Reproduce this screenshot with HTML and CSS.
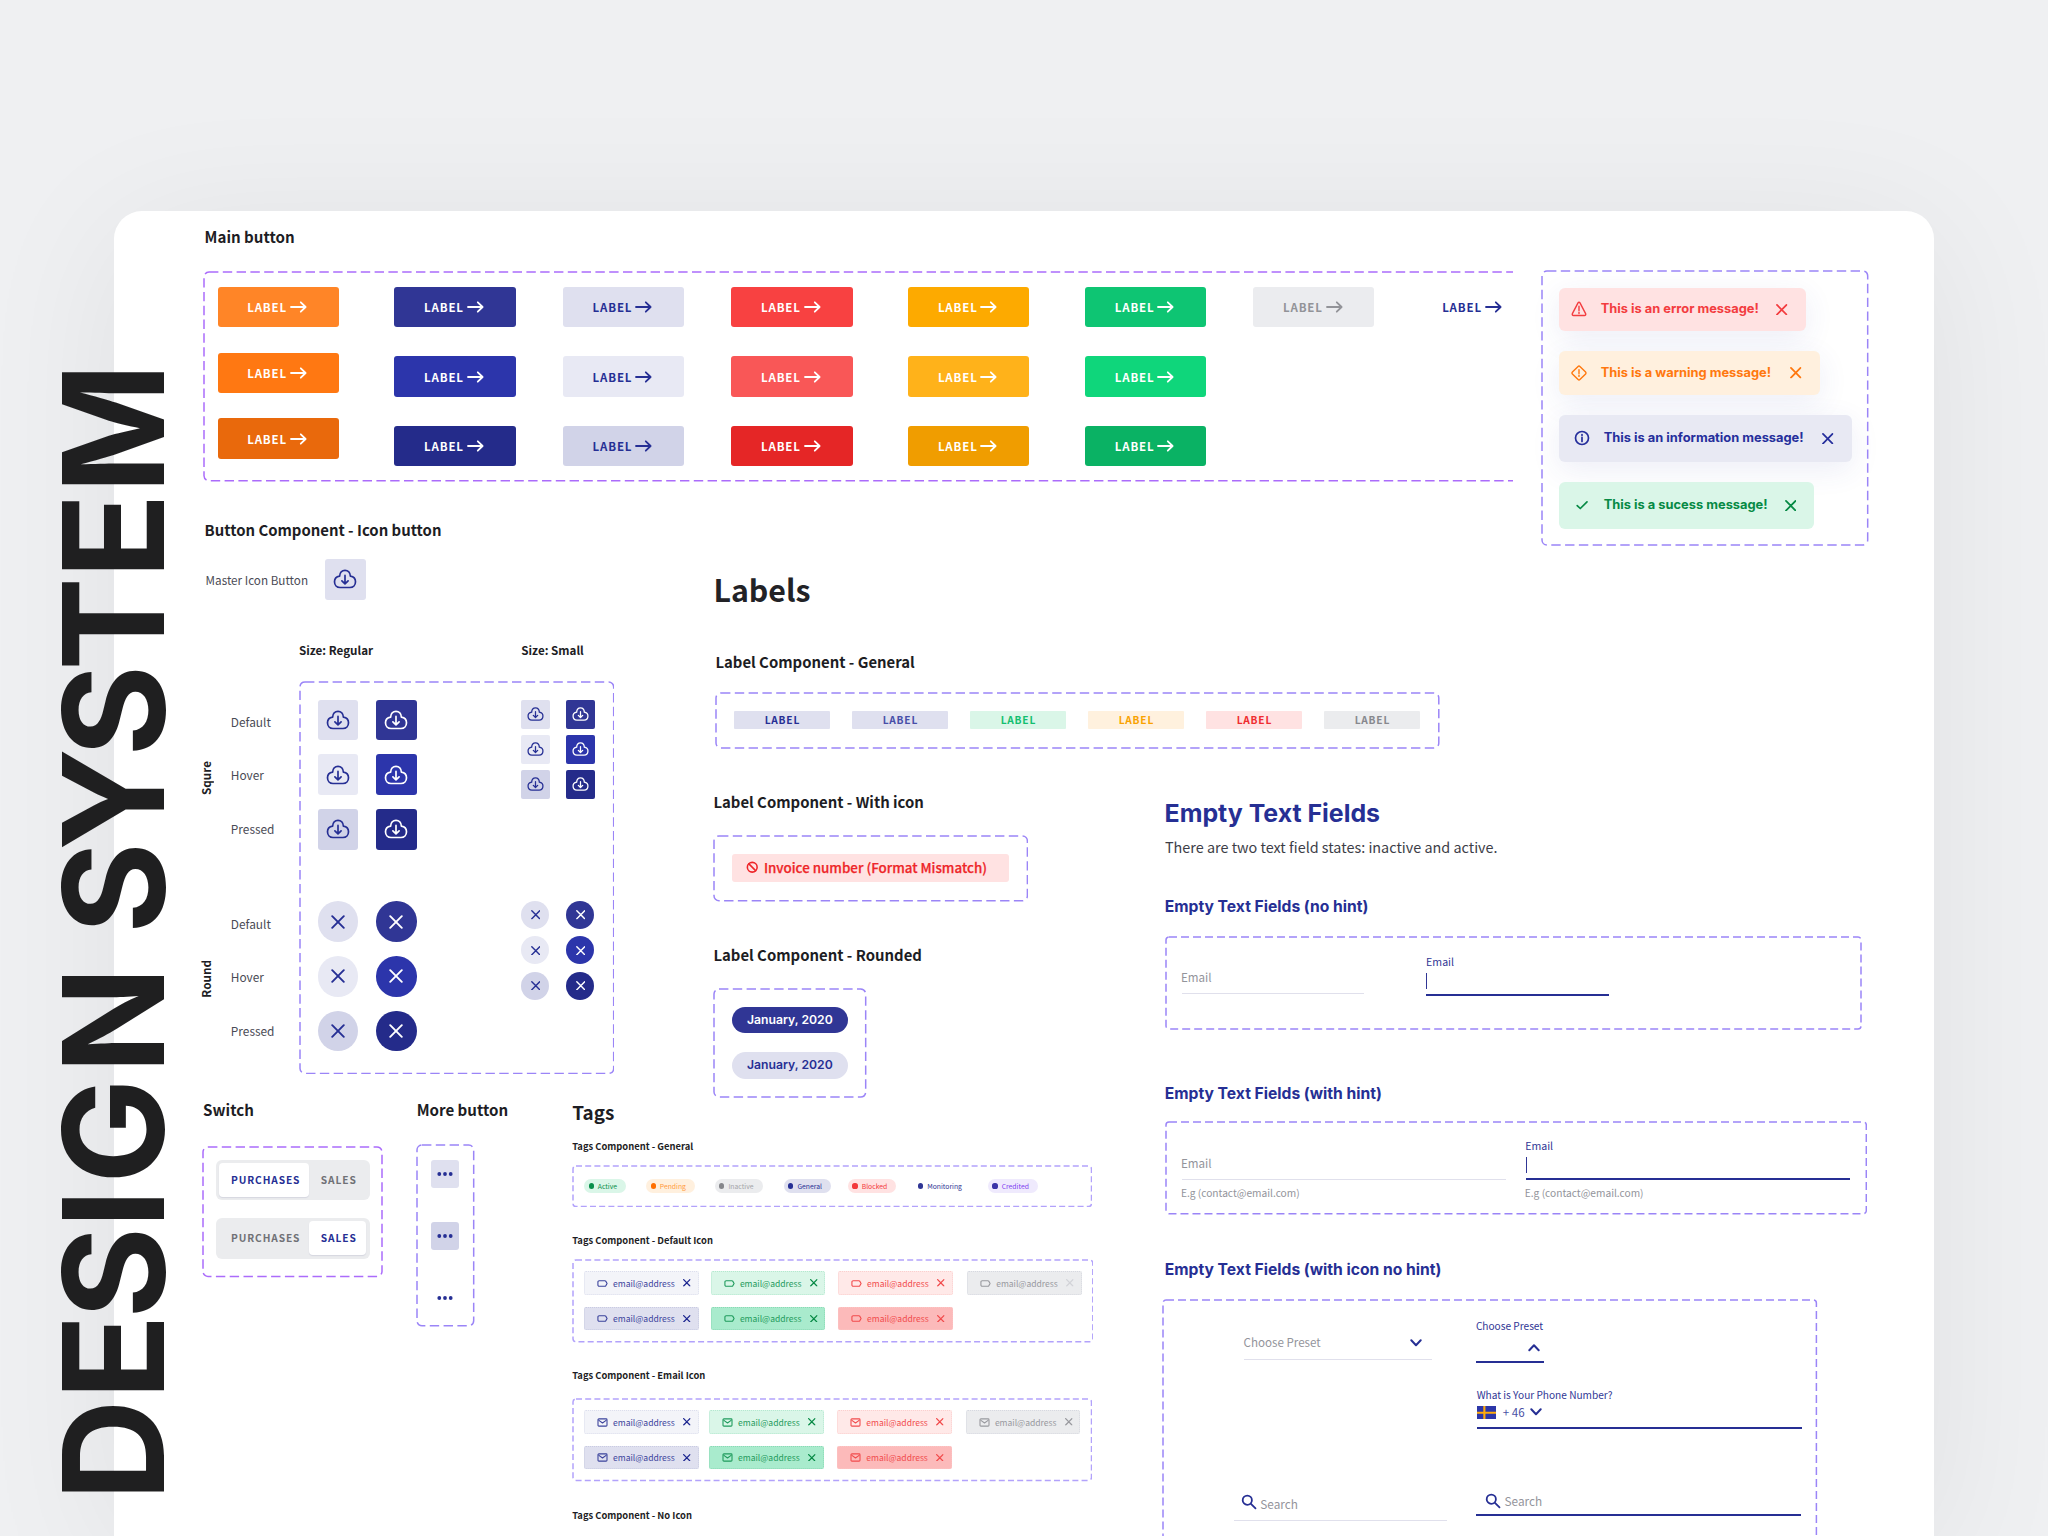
FILE: index.html
```html
<!DOCTYPE html>
<html lang="en">
<head>
    <meta charset="UTF-8">
    <meta name="viewport" content="width=device-width, initial-scale=1.0">
    <title>Design System</title>
    <link rel="stylesheet" href="styles.css">
</head>
<body>
    <!-- icon sprite -->
    <svg class="sprite">
        <symbol id="arrow" viewBox="0 0 17 12"><path d="M1 6h14.5M10.8 1.3 15.6 6l-4.8 4.7"/></symbol>
        <symbol id="cloud" viewBox="0 0 24 20"><path d="M6.6 7.2C6.8 3.7 9 1.3 12 1.3s5.2 2.4 5.4 5.9c3 .5 5.1 2.7 5.1 5.6 0 3.3-2.3 5.7-5.5 5.7H7c-3.2 0-5.5-2.4-5.5-5.7 0-2.9 2.1-5.1 5.1-5.6zM12 6.4v8.2M8.9 11.8l3.1 3.1 3.1-3.1"/></symbol>
        <symbol id="cross" viewBox="0 0 14 14"><path d="M1.2 1.2l11.6 11.6M12.8 1.2 1.2 12.8"/></symbol>
        <symbol id="error" viewBox="0 0 16 16"><path d="M7 1.9 1.4 12.6c-.4.9 0 1.9 1.1 1.9h11c1.1 0 1.5-1 1.1-1.9L9 1.9c-.5-.8-1.5-.8-2 0zM8 5.3v4.2M8 11.2v1.3"/></symbol>
        <symbol id="warning" viewBox="0 0 16 16"><path d="M7.1 1.4 1.4 7.1c-.5.5-.5 1.3 0 1.8l5.7 5.7c.5.5 1.3.5 1.8 0l5.7-5.7c.5-.5.5-1.3 0-1.8L8.9 1.4c-.5-.5-1.3-.5-1.8 0zM8 4.6v4M8 10.1v1.3"/></symbol>
        <symbol id="info" viewBox="0 0 16 16"><circle cx="8" cy="8" r="6.5"/><path d="M8 7.3v4.2M8 4.5v.8"/></symbol>
        <symbol id="check" viewBox="0 0 16 16"><path d="M3.2 8.6 6.3 11.5 13 4.8"/></symbol>
        <symbol id="ban" viewBox="0 0 12 12"><circle cx="6" cy="6" r="4.7"/><path d="M2.8 2.8l6.4 6.4"/></symbol>
        <symbol id="tag" viewBox="0 0 12 8"><path d="M2.4 1h6.2c.4 0 .7.1.9.4L11 4 9.5 6.6c-.2.3-.5.4-.9.4H2.4C1.6 7 1 6.4 1 5.6V2.4C1 1.6 1.6 1 2.4 1z"/></symbol>
        <symbol id="mail" viewBox="0 0 12 10"><rect x="1" y="1" width="10" height="8" rx="1"/><path d="M2 2.6l4 3 4-3"/></symbol>
        <symbol id="down" viewBox="0 0 12 8"><path d="M1.3 1.3 6 6.2l4.7-4.9"/></symbol>
        <symbol id="up" viewBox="0 0 12 8"><path d="M1.3 6.2 6 1.3l4.7 4.9"/></symbol>
        <symbol id="search" viewBox="0 0 16 16"><circle cx="6.3" cy="6.2" r="4.6"/><path d="M9.7 9.6l4.8 4.8"/></symbol>
        <symbol id="dots" viewBox="0 0 16 4"><circle cx="2.3" cy="2" r="1.9"/><circle cx="8" cy="2" r="1.9"/><circle cx="13.7" cy="2" r="1.9"/></symbol>
    </svg>

    <div class="title">D<span class="k-mid">E</span><span class="k-low">S</span><span class="k-wide">IG</span>N <span class="k-tight">SY</span><span class="k-mid2">S</span><span class="k-low">T</span>EM</div>

    <div class="sheet">
        <div class="top">
            <section class="main-buttons">
                <h2>Main button</h2>
                <div class="frame purple open">
                    <svg class="dash"><rect/></svg>
                    <div class="btn-col tight">
                        <div class="btn orange">LABEL<svg><use href="#arrow"/></svg></div>
                        <div class="btn orange-hover">LABEL<svg><use href="#arrow"/></svg></div>
                        <div class="btn orange-pressed">LABEL<svg><use href="#arrow"/></svg></div>
                    </div>
                    <div class="btn-col">
                        <div class="btn navy">LABEL<svg><use href="#arrow"/></svg></div>
                        <div class="btn navy-hover">LABEL<svg><use href="#arrow"/></svg></div>
                        <div class="btn navy-pressed">LABEL<svg><use href="#arrow"/></svg></div>
                    </div>
                    <div class="btn-col">
                        <div class="btn soft">LABEL<svg><use href="#arrow"/></svg></div>
                        <div class="btn soft-hover">LABEL<svg><use href="#arrow"/></svg></div>
                        <div class="btn soft-pressed">LABEL<svg><use href="#arrow"/></svg></div>
                    </div>
                    <div class="btn-col">
                        <div class="btn red">LABEL<svg><use href="#arrow"/></svg></div>
                        <div class="btn red-hover">LABEL<svg><use href="#arrow"/></svg></div>
                        <div class="btn red-pressed">LABEL<svg><use href="#arrow"/></svg></div>
                    </div>
                    <div class="btn-col">
                        <div class="btn yellow">LABEL<svg><use href="#arrow"/></svg></div>
                        <div class="btn yellow-hover">LABEL<svg><use href="#arrow"/></svg></div>
                        <div class="btn yellow-pressed">LABEL<svg><use href="#arrow"/></svg></div>
                    </div>
                    <div class="btn-col">
                        <div class="btn green">LABEL<svg><use href="#arrow"/></svg></div>
                        <div class="btn green-hover">LABEL<svg><use href="#arrow"/></svg></div>
                        <div class="btn green-pressed">LABEL<svg><use href="#arrow"/></svg></div>
                    </div>
                    <div class="btn-col">
                        <div class="btn disabled">LABEL<svg><use href="#arrow"/></svg></div>
                    </div>
                    <div class="btn-col">
                        <div class="btn ghost">LABEL<svg><use href="#arrow"/></svg></div>
                    </div>
                </div>
            </section>

            <section class="frame alerts">
                <svg class="dash"><rect/></svg>
                <div class="alert error"><svg class="ico"><use href="#error"/></svg><span>This is an error message!</span><svg class="x"><use href="#cross"/></svg></div>
                <div class="alert warning"><svg class="ico"><use href="#warning"/></svg><span>This is a warning message!</span><svg class="x"><use href="#cross"/></svg></div>
                <div class="alert info"><svg class="ico"><use href="#info"/></svg><span>This is an information message!</span><svg class="x"><use href="#cross"/></svg></div>
                <div class="alert success"><svg class="ico"><use href="#check"/></svg><span>This is a sucess message!</span><svg class="x"><use href="#cross"/></svg></div>
            </section>
        </div>

        <div class="lower">
            <div class="left">
                <div class="upper">
                    <section class="icon-buttons">
                        <h2>Button Component - Icon button</h2>
                        <div class="master">
                            <span>Master Icon Button</span>
                            <div class="icon-btn soft"><svg><use href="#cloud"/></svg></div>
                        </div>
                        <div class="sizes"><b>Size: Regular</b><b>Size: Small</b></div>
                        <div class="matrix">
                            <div class="shapes"><b>Squre</b><b>Round</b></div>
                            <div class="states">
                                <div><span>Default</span><span>Hover</span><span>Pressed</span></div>
                                <div><span>Default</span><span>Hover</span><span>Pressed</span></div>
                            </div>
                            <div class="frame icons">
                                <svg class="dash"><rect/></svg>
                                <div class="regular">
                                    <div class="icon-grid">
                                        <div class="icon-btn soft"><svg><use href="#cloud"/></svg></div>
                                        <div class="icon-btn navy"><svg><use href="#cloud"/></svg></div>
                                        <div class="icon-btn soft-hover"><svg><use href="#cloud"/></svg></div>
                                        <div class="icon-btn navy-hover"><svg><use href="#cloud"/></svg></div>
                                        <div class="icon-btn soft-pressed"><svg><use href="#cloud"/></svg></div>
                                        <div class="icon-btn navy-pressed"><svg><use href="#cloud"/></svg></div>
                                    </div>
                                    <div class="icon-grid round">
                                        <div class="icon-btn soft"><svg><use href="#cross"/></svg></div>
                                        <div class="icon-btn navy"><svg><use href="#cross"/></svg></div>
                                        <div class="icon-btn soft-hover"><svg><use href="#cross"/></svg></div>
                                        <div class="icon-btn navy-hover"><svg><use href="#cross"/></svg></div>
                                        <div class="icon-btn soft-pressed"><svg><use href="#cross"/></svg></div>
                                        <div class="icon-btn navy-pressed"><svg><use href="#cross"/></svg></div>
                                    </div>
                                </div>
                                <div class="small">
                                    <div class="icon-grid">
                                        <div class="icon-btn soft"><svg><use href="#cloud"/></svg></div>
                                        <div class="icon-btn navy"><svg><use href="#cloud"/></svg></div>
                                        <div class="icon-btn soft-hover"><svg><use href="#cloud"/></svg></div>
                                        <div class="icon-btn navy-hover"><svg><use href="#cloud"/></svg></div>
                                        <div class="icon-btn soft-pressed"><svg><use href="#cloud"/></svg></div>
                                        <div class="icon-btn navy-pressed"><svg><use href="#cloud"/></svg></div>
                                    </div>
                                    <div class="icon-grid round">
                                        <div class="icon-btn soft"><svg><use href="#cross"/></svg></div>
                                        <div class="icon-btn navy"><svg><use href="#cross"/></svg></div>
                                        <div class="icon-btn soft-hover"><svg><use href="#cross"/></svg></div>
                                        <div class="icon-btn navy-hover"><svg><use href="#cross"/></svg></div>
                                        <div class="icon-btn soft-pressed"><svg><use href="#cross"/></svg></div>
                                        <div class="icon-btn navy-pressed"><svg><use href="#cross"/></svg></div>
                                    </div>
                                </div>
                            </div>
                        </div>
                    </section>

                    <section class="labels">
                        <h1>Labels</h1>
                        <h2 class="general">Label Component - General</h2>
                        <div class="frame chips">
                            <svg class="dash"><rect/></svg>
                            <span class="chip soft">LABEL</span>
                            <span class="chip soft light">LABEL</span>
                            <span class="chip chip-green">LABEL</span>
                            <span class="chip chip-yellow">LABEL</span>
                            <span class="chip chip-red">LABEL</span>
                            <span class="chip chip-gray">LABEL</span>
                        </div>
                        <h2 class="h-with">Label Component - With icon</h2>
                        <div class="frame with-icon">
                            <svg class="dash"><rect/></svg>
                            <div class="invoice"><svg><use href="#ban"/></svg>Invoice number (Format Mismatch)</div>
                        </div>
                        <h2>Label Component - Rounded</h2>
                        <div class="frame rounded">
                            <svg class="dash"><rect/></svg>
                            <div class="pill navy">January, 2020</div>
                            <div class="pill soft">January, 2020</div>
                        </div>
                    </section>
                </div>

                <div class="bottom">
                    <section class="switches">
                        <h2>Switch</h2>
                        <div class="frame purple">
                            <svg class="dash"><rect/></svg>
                            <div class="switch"><span class="on">PURCHASES</span><span>SALES</span></div>
                            <div class="switch"><span>PURCHASES</span><span class="on">SALES</span></div>
                        </div>
                    </section>
                    <section class="more">
                        <h2>More button</h2>
                        <div class="frame">
                            <svg class="dash"><rect/></svg>
                            <div class="more-btn soft"><svg><use href="#dots"/></svg></div>
                            <div class="more-btn soft-pressed"><svg><use href="#dots"/></svg></div>
                            <div class="more-btn"><svg><use href="#dots"/></svg></div>
                        </div>
                    </section>
                    <section class="tags">
                        <h2>Tags</h2>
                        <h3>Tags Component - General</h3>
                        <div class="frame fine statuses">
                            <svg class="dash"><rect/></svg>
                            <div><span class="status active">Active</span></div>
                            <div><span class="status pending">Pending</span></div>
                            <div><span class="status inactive">Inactive</span></div>
                            <div><span class="status st-general">General</span></div>
                            <div><span class="status blocked">Blocked</span></div>
                            <div><span class="status monitoring">Monitoring</span></div>
                            <div><span class="status credited">Credited</span></div>
                        </div>
                        <h3 class="h-default">Tags Component - Default Icon</h3>
                        <div class="frame fine tag-grid">
                            <svg class="dash"><rect/></svg>
                            <div class="tag t-navy"><svg class="ti"><use href="#tag"/></svg>email@address<svg class="tx"><use href="#cross"/></svg></div>
                            <div class="tag t-green"><svg class="ti"><use href="#tag"/></svg>email@address<svg class="tx"><use href="#cross"/></svg></div>
                            <div class="tag t-red"><svg class="ti"><use href="#tag"/></svg>email@address<svg class="tx"><use href="#cross"/></svg></div>
                            <div class="tag t-gray faded"><svg class="ti"><use href="#tag"/></svg>email@address<svg class="tx"><use href="#cross"/></svg></div>
                            <div class="tag t-navy on"><svg class="ti"><use href="#tag"/></svg>email@address<svg class="tx"><use href="#cross"/></svg></div>
                            <div class="tag t-green on"><svg class="ti"><use href="#tag"/></svg>email@address<svg class="tx"><use href="#cross"/></svg></div>
                            <div class="tag t-red on"><svg class="ti"><use href="#tag"/></svg>email@address<svg class="tx"><use href="#cross"/></svg></div>
                        </div>
                        <h3 class="h-email">Tags Component - Email Icon</h3>
                        <div class="frame fine tag-grid mail">
                            <svg class="dash"><rect/></svg>
                            <div class="tag t-navy"><svg class="ti"><use href="#mail"/></svg>email@address<svg class="tx"><use href="#cross"/></svg></div>
                            <div class="tag t-green"><svg class="ti"><use href="#mail"/></svg>email@address<svg class="tx"><use href="#cross"/></svg></div>
                            <div class="tag t-red"><svg class="ti"><use href="#mail"/></svg>email@address<svg class="tx"><use href="#cross"/></svg></div>
                            <div class="tag t-gray"><svg class="ti"><use href="#mail"/></svg>email@address<svg class="tx"><use href="#cross"/></svg></div>
                            <div class="tag t-navy on"><svg class="ti"><use href="#mail"/></svg>email@address<svg class="tx"><use href="#cross"/></svg></div>
                            <div class="tag t-green on"><svg class="ti"><use href="#mail"/></svg>email@address<svg class="tx"><use href="#cross"/></svg></div>
                            <div class="tag t-red on"><svg class="ti"><use href="#mail"/></svg>email@address<svg class="tx"><use href="#cross"/></svg></div>
                        </div>
                        <h3 class="h-none">Tags Component - No Icon</h3>
                    </section>
                </div>
            </div>

            <section class="fields">
                <h1>Empty Text Fields</h1>
                <p>There are two text field states: inactive and active.</p>

                <h2>Empty Text Fields (no hint)</h2>
                <div class="frame mid no-hint">
                    <svg class="dash"><rect/></svg>
                    <div class="field"><span class="value">Email</span></div>
                    <div class="field focus"><label>Email</label><i class="caret"></i></div>
                </div>

                <h2 class="h-hint">Empty Text Fields (with hint)</h2>
                <div class="frame mid hint">
                    <svg class="dash"><rect/></svg>
                    <div>
                        <div class="field"><span class="value">Email</span></div>
                        <small>E.g (contact@email.com)</small>
                    </div>
                    <div>
                        <div class="field focus"><label>Email</label><i class="caret"></i></div>
                        <small>E.g (contact@email.com)</small>
                    </div>
                </div>

                <h2 class="h-icon">Empty Text Fields (with icon no hint)</h2>
                <div class="frame mid with-icons">
                    <svg class="dash"><rect/></svg>
                    <div class="col-inactive">
                        <div class="field select"><span class="value">Choose Preset</span><svg class="chev"><use href="#down"/></svg></div>
                        <div class="field search"><svg class="glass"><use href="#search"/></svg><span class="value">Search</span></div>
                    </div>
                    <div class="col-active">
                        <div class="field focus select"><label>Choose Preset</label><svg class="chev"><use href="#up"/></svg></div>
                        <div class="field focus phone">
                            <label>What is Your Phone Number?</label>
                            <div class="number">
                                <svg class="flag" viewBox="0 0 20 14" preserveAspectRatio="none"><rect width="20" height="14" fill="#2d37a8"/><path d="M7.6 0v14M0 7h20" stroke="#ffab0a" stroke-width="2.2"/></svg>
                                <span>+ 46</span>
                                <svg class="chev"><use href="#down"/></svg>
                            </div>
                        </div>
                        <div class="field focus search"><svg class="glass"><use href="#search"/></svg><span class="value">Search</span></div>
                    </div>
                </div>
            </section>
        </div>
    </div>
</body>
</html>
```
FILE: styles.css
```css
* {
    box-sizing: border-box;
}
html, body {
    width: 2048px;
    height: 1536px;
    margin: 0;
    overflow: hidden;
}
body {
    position: relative;
    background: #eff0f2;
    font-family: "Noto Sans CJK SC", "Noto Sans", sans-serif;
    color: #1d1d24;
}
svg {
    display: block;
    flex: none;
    fill: none;
    stroke: currentColor;
    stroke-linecap: round;
    stroke-linejoin: round;
}
.sprite {
    position: absolute;
    width: 0;
    height: 0;
}
h1, h2, h3, p {
    margin: 0;
    white-space: nowrap;
}
h2 {
    font-size: 15.1px;
    line-height: 20px;
}
h3 {
    font-size: 9.4px;
    line-height: 14px;
}

/* big vertical title over the sheet edge */
.title {
    position: absolute;
    z-index: 2;
    left: 28.2px;
    bottom: 35px;
    writing-mode: vertical-rl;
    transform: rotate(180deg);
    font: 700 140px/170px Inter, sans-serif;
    color: #1f1f20;
    white-space: nowrap;
}
.k-mid { letter-spacing: -4px; }
.k-mid2 { letter-spacing: -5.6px; }
.k-low { letter-spacing: -1.4px; }
.k-wide { letter-spacing: 5.2px; }
.k-tight { letter-spacing: -8.5px; }

.sheet {
    margin: 211px 0 0 114px;
    width: 1820px;
    height: 1325px;
    padding: 15px 0 0 89px;
    border-radius: 28px 28px 0 0;
    background: #fff;
    box-shadow: 0 20px 150px rgba(20, 22, 30, 0.065);
}

/* dashed component frames */
.frame {
    position: relative;
    color: #9b85f7;
}
.dash {
    position: absolute;
    inset: 0;
    width: 100%;
    height: 100%;
}
.dash rect {
    x: 1px;
    y: 1px;
    width: calc(100% - 2px);
    height: calc(100% - 2px);
    rx: 5px;
    stroke-width: 1.5px;
    stroke-dasharray: 9.4 4.4;
    stroke-linecap: butt;
}
.purple {
    color: #ab6cfb;
}
.mid .dash rect {
    stroke-dasharray: 8 4;
    rx: 3px;
}
.fine {
    color: #b2a2fb;
}
.fine .dash rect {
    stroke-dasharray: 6 3.2;
    rx: 3px;
}

/* colours */
.orange { background: #ff8527; }
.orange-hover { background: #ff7812; }
.orange-pressed { background: #e9690c; }
.navy { background: #303695; color: #fff; }
.navy-hover { background: #2c35ab; color: #fff; }
.navy-pressed { background: #242b8a; color: #fff; }
.soft { background: #dfe0ef; color: #262f94; }
.soft-hover { background: #e8e9f4; color: #262f94; }
.soft-pressed { background: #d1d3e8; color: #262f94; }
.red { background: #f84141; }
.red-hover { background: #f95757; }
.red-pressed { background: #e52626; }
.yellow { background: #fdaa00; }
.yellow-hover { background: #ffb21a; }
.yellow-pressed { background: #f09d00; }
.green { background: #0ec573; }
.green-hover { background: #0fd67b; }
.green-pressed { background: #0ab264; }

/* top row */
.top {
    display: flex;
    align-items: flex-start;
    height: 293px;
}
.main-buttons {
    width: 1310px;
}
.main-buttons h2, .icon-buttons h2 {
    padding-left: 1.6px;
}
.icon-buttons h2 {
    padding-top: 0.7px;
    font-size: 14.9px;
}
.main-buttons .frame {
    display: flex;
    margin-top: 25.3px;
    height: 210.7px;
    padding: 15.6px 0 0 14.5px;
}
.open .dash rect {
    width: calc(100% + 20px);
}
.btn-col {
    display: flex;
    flex-direction: column;
    gap: 28.9px;
    margin-right: 47.3px;
}
.btn-col:nth-of-type(1),
.btn-col:nth-of-type(4),
.btn-col:nth-of-type(5) {
    margin-right: 55.7px;
}
.btn-col:nth-of-type(6) {
    margin-right: 47px;
}
.btn-col:nth-of-type(7) {
    margin-right: 38px;
}
.btn-col.tight {
    gap: 25.2px;
}
.btn {
    display: flex;
    align-items: center;
    gap: 2.8px;
    width: 121.2px;
    height: 40.6px;
    padding-left: 29.7px;
    border-radius: 3px;
    color: #fff;
    font-size: 11.5px;
    font-weight: 700;
    letter-spacing: 0.85px;
}
.btn svg {
    width: 17px;
    height: 12px;
    stroke-width: 1.8;
}
.btn.soft, .btn.soft-hover, .btn.soft-pressed, .btn.ghost {
    color: #262f94;
}
.btn.disabled {
    background: #ebecef;
    color: #929398;
}

.alerts {
    display: flex;
    flex-direction: column;
    align-items: flex-start;
    margin: 44.4px 0 0 28.3px;
    width: 327.7px;
    height: 276px;
    padding: 17.3px 0 0 17.7px;
}
.alert {
    display: flex;
    flex: none;
    align-items: center;
    height: 43.3px;
    margin-bottom: 20.3px;
    padding-left: 12px;
    border-radius: 6px;
    font: 700 12.87px/16px Inter, sans-serif;
    white-space: nowrap;
}
.alert span {
    flex: 1;
    margin: -0.8px 0 0 13.8px;
}
.alert .ico {
    width: 16px;
    height: 16px;
    stroke-width: 1.4;
}
.alert .x {
    width: 11.5px;
    height: 11.5px;
    margin-right: 18px;
    stroke-width: 2.2;
}
.error { width: 247px; background: #ffe2e2; color: #f33c3f; }
.warning { width: 260.7px; background: #fff0de; color: #ff780f; }
.info { width: 292.7px; background: #e8e9f3; color: #262f9c; }
.success { width: 255.4px; background: #daf6e8; color: #078a45; }
.error, .warning, .info {
    box-shadow: 0 8px 30px rgba(60, 70, 170, 0.09);
}
.alert.info, .alert.success {
    height: 46.8px;
    padding-left: 15px;
}
.info .ico, .success .ico {
    stroke-width: 1.7;
}

/* lower area */
.lower {
    display: flex;
    align-items: flex-start;
}
.left {
    width: 961px;
}
.upper {
    display: flex;
    height: 579.7px;
}
.icon-buttons {
    flex: none;
    width: 509.6px;
}
.master {
    display: flex;
    align-items: center;
    margin-top: 19.3px;
    padding-left: 2.6px;
    font-size: 11.7px;
    color: #4a4b55;
}
.master span {
    width: 119.4px;
}
.icon-btn {
    display: flex;
    align-items: center;
    justify-content: center;
    width: 40.7px;
    height: 40.7px;
    border-radius: 3px;
}
.icon-btn svg {
    width: 24px;
    height: 20px;
    stroke-width: 1.7;
}
.sizes {
    display: flex;
    margin-top: 42px;
    padding-left: 96px;
    font-size: 11.64px;
    line-height: 16px;
}
.sizes b {
    flex: none;
    width: 222.3px;
}
.sizes b + b {
    width: auto;
}
.matrix {
    display: flex;
    margin-top: 23.4px;
}
.shapes {
    display: flex;
    flex-direction: column;
    gap: 165.6px;
    width: 32.8px;
    margin-left: -5.2px;
    padding-top: 79.8px;
    font-size: 11.7px;
    line-height: 16px;
}
.shapes b {
    writing-mode: vertical-rl;
    transform: rotate(180deg);
    width: 16px;
}
.states {
    width: 68.1px;
    padding: 32.8px 0 0 0.2px;
    font-size: 11.9px;
    line-height: 16px;
    color: #4a4b55;
}
.states div {
    display: flex;
    flex-direction: column;
    gap: 37.6px;
    margin-bottom: 78.6px;
}
.icons {
    display: flex;
    width: 315.7px;
    height: 393.4px;
    padding: 18.7px 0 0 19px;
}
.icon-grid {
    display: grid;
    grid-template-columns: 40.7px 40.7px;
    gap: 14px 17.6px;
}
.icon-grid.round {
    margin-top: 51.5px;
}
.round .icon-btn {
    border-radius: 50%;
}
.round .icon-btn svg {
    width: 14px;
    height: 14px;
    stroke-width: 1.9;
}
.small {
    margin-left: 104.6px;
}
.small .icon-grid {
    grid-template-columns: 28.8px 28.8px;
    gap: 6.4px 16.3px;
}
.small .icon-btn {
    width: 28.8px;
    height: 28.8px;
    border-radius: 2px;
}
.small .icon-btn svg {
    width: 17px;
    height: 14.2px;
    stroke-width: 1.8;
}
.small .icon-grid.round {
    margin-top: 102.3px;
    grid-template-columns: 28px 28px;
    gap: 7.2px 17.2px;
}
.small .round .icon-btn {
    width: 28px;
    height: 28px;
    border-radius: 50%;
}
.small .round .icon-btn svg {
    width: 9.5px;
    height: 9.5px;
    stroke-width: 2.1;
}

/* labels */
.labels {
    width: 730px;
    flex: none;
}
.labels h1 {
    margin-top: 49.5px;
    padding-left: 0.8px;
    font-size: 30.3px;
    line-height: 40px;
    color: #222226;
}
.labels h2 {
    margin-top: 43.4px;
    padding-left: 0.8px;
    font-size: 14.9px;
}
.labels h2.general {
    margin-top: 43px;
    padding-left: 2.8px;
}
.labels h2.h-with {
    margin-top: 43.4px;
}
.chips {
    display: flex;
    gap: 22px;
    width: 724.8px;
    height: 57.1px;
    margin: 20.1px 0 0 2.3px;
    padding: 19px 0 0 19px;
}
.chip {
    width: 96px;
    height: 18.3px;
    border-radius: 1px;
    padding-left: 1px;
    text-align: center;
    font-size: 10.2px;
    line-height: 18px;
    font-weight: 700;
    letter-spacing: 0.8px;
}
.chip.light { color: #474ea8; }
.chip-green { background: #daf6e8; color: #13bf70; }
.chip-yellow { background: #fff1de; color: #f9a200; }
.chip-red { background: #ffe2e2; color: #ef2c2f; }
.chip-gray { background: #ebecee; color: #87888d; }
.with-icon {
    width: 315.4px;
    height: 66.8px;
    margin: 22.7px 0 0 0.3px;
    padding: 19.2px 0 0 19px;
}
.invoice {
    display: flex;
    align-items: center;
    gap: 5px;
    width: 277px;
    height: 28px;
    padding: 0 0 1.6px 14.5px;
    border-radius: 3px;
    background: #ffe2e2;
    color: #ee2629;
    font-size: 13.37px;
    line-height: 20px;
    font-weight: 500;
    -webkit-text-stroke: 0.25px;
    white-space: nowrap;
}
.invoice svg {
    width: 12.5px;
    height: 12.5px;
    margin-top: 1px;
    stroke-width: 1.5;
}
.rounded {
    display: flex;
    flex-direction: column;
    gap: 19px;
    width: 153.7px;
    height: 110px;
    margin: 22.9px 0 0 0.3px;
    padding: 19.2px 0 0 19px;
}
.pill {
    width: 116px;
    height: 26.3px;
    border-radius: 14px;
    text-align: center;
    font: 600 12.2px/26px Inter, sans-serif;
}

/* switch, more */
.bottom {
    display: flex;
    align-items: flex-start;
}
.switches {
    width: 213.6px;
    margin-left: -0.6px;
}
.bottom section > h2 {
    padding-left: 0.7px;
}
.switches .frame {
    width: 181px;
    height: 131.4px;
    margin-top: 27.6px;
    padding: 13.7px 0 0 13.6px;
}
.switch {
    display: flex;
    width: 153.5px;
    height: 40.5px;
    margin-bottom: 17.6px;
    padding: 3.4px;
    border-radius: 6px;
    background: #ebecee;
    color: #707176;
    font-size: 10.2px;
    line-height: 33.4px;
    font-weight: 700;
    letter-spacing: 0.9px;
}
.switch span {
    width: 90px;
    padding-left: 11.6px;
    border-radius: 4px;
}
.switch span + span {
    width: 57px;
}
.switch .on {
    background: #fff;
    color: #262f94;
    box-shadow: 0 1px 1px rgba(60, 60, 120, 0.12);
}
.more {
    width: 155.5px;
}
.more .frame {
    display: flex;
    flex-direction: column;
    gap: 34px;
    width: 58.7px;
    height: 182.7px;
    margin-top: 25.6px;
    padding: 15.4px 0 0 15px;
}
.more-btn {
    display: flex;
    align-items: center;
    justify-content: center;
    width: 28px;
    height: 28px;
    border-radius: 3px;
    color: #262f94;
}
.more-btn svg {
    width: 16px;
    height: 4px;
    fill: currentColor;
    stroke: none;
}

/* tags */
.tags {
    width: 521.8px;
    flex: none;
}
.tags h2 {
    margin: 1.3px 0 15px 0;
    font-size: 18.9px;
    line-height: 24px;
}
.tags h3 {
    padding-left: 0.7px;
}
.statuses {
    display: grid;
    grid-template-columns: 62px 68.6px 69px 64.3px 65.5px 74.5px auto;
    width: 520.5px;
    height: 42.6px;
    margin-top: 11.7px;
    padding: 14.3px 0 0 12.5px;
}
.statuses div {
    display: flex;
}
.status {
    display: flex;
    align-items: center;
    gap: 4px;
    height: 14px;
    padding: 0 9.2px 0 4.6px;
    border-radius: 7px;
    font-size: 6.8px;
    line-height: 14px;
}
.status::before {
    content: "";
    width: 5.2px;
    height: 5.2px;
    border-radius: 50%;
    background: currentColor;
}
.active { background: #daf6e8; color: #0a8f4b; }
.pending { background: #fff0de; color: #ff9a3d; }
.pending::before { background: #ff6f00; }
.inactive { background: #ebecee; color: #a3a4a8; }
.inactive::before { background: #85868b; }
.st-general { background: #dfe0ef; color: #262f94; }
.blocked { background: #ffe2e2; color: #f3383b; }
.monitoring { color: #303695; }
.credited { background: #efeafd; color: #7c3df0; }
.credited::before { background: #3b34a8; }
.h-default { margin-top: 25.9px; }
.h-email { margin-top: 25.2px; }
.h-none { margin-top: 26px; }
.tag-grid {
    display: grid;
    grid-template-columns: 126.8px 127.2px 129.1px 115px;
    grid-auto-rows: 35.3px;
    width: 521.8px;
    height: 83.7px;
    margin-top: 12.1px;
    padding: 12px 0 0 12.5px;
}
.tag-grid.mail {
    grid-template-columns: 125px 128.2px 128.6px 115px;
    width: 520.5px;
    height: 83.4px;
    margin-top: 16.1px;
}
.tag {
    display: flex;
    align-items: center;
    width: 114.6px;
    height: 23.7px;
    padding-left: 12px;
    border: 1px dotted;
    border-radius: 2px;
    font-size: 8.54px;
    line-height: 14px;
}
.tag .ti {
    width: 11px;
    height: 9px;
    margin-right: 5.1px;
    stroke-width: 1.2;
}
.tag .tx {
    width: 7.6px;
    height: 7.6px;
    margin-left: 8.6px;
    stroke-width: 2.4;
}
.t-navy { background: #f3f4f9; border-color: #dcdeed; color: #3b439c; }
.t-navy.on { background: #dfe0ef; border-color: #c9cbe2; }
.t-green { background: #daf6e8; border-color: #b4e8cf; color: #1f9b5c; }
.t-green.on { background: #a9ebcd; border-color: #8bd9b5; }
.t-red { background: #ffe9e8; border-color: #fbcfce; color: #f14b4c; }
.t-red.on { background: #fcbaba; border-color: #fcc4c3; }
.t-gray { background: #ebecee; border-color: #d6d8e0; color: #98999e; }
.faded .tx { color: #d2d3d8; }
.t-navy .tx { color: #1d2690; }
.t-green .tx { color: #078a45; }

/* text fields */
.fields {
    margin-top: 277.5px;
    color: #262f94;
}
.fields h1 {
    padding-left: 0.6px;
    font: 700 24.9px/32px Inter, sans-serif;
}
.fields h2 {
    margin-top: 40.1px;
    padding-left: 0.8px;
    font: 700 15.65px/20px Inter, sans-serif;
}
.fields p {
    margin: 8.5px 0 0 1px;
    font-size: 14.4px;
    line-height: 20px;
    color: #3d3e47;
}
.fields .h-hint { margin-top: 53.8px; }
.fields .h-icon { margin-top: 45.4px; }
.fields .frame {
    margin-left: 0.7px;
}
.no-hint {
    display: flex;
    align-items: flex-start;
    gap: 62.1px;
    width: 697px;
    height: 94px;
    margin-top: 18.9px;
    padding: 18px 0 0 17px;
}
.field {
    display: flex;
    width: 182.7px;
    height: 40px;
    padding-top: 14.6px;
    border-bottom: 1px solid #e0e0ec;
    color: #303695;
}
.value {
    margin-left: -0.7px;
    font-size: 11.6px;
    line-height: 16px;
    color: #93949b;
}
.field.focus {
    flex-direction: column;
    height: 42px;
    padding-top: 0;
    border-bottom: 2px solid #262f94;
}
.field label {
    margin-left: -0.4px;
    font-size: 10.6px;
    line-height: 15px;
    white-space: nowrap;
}
.caret {
    width: 1px;
    height: 16px;
    margin-top: 4.3px;
    background: #303695;
}
.hint {
    display: flex;
    gap: 19.5px;
    width: 702.3px;
    height: 93.7px;
    margin-top: 17.5px;
    padding: 16.4px 0 0 17px;
}
.hint .field {
    width: 324.4px;
    height: 42.2px;
    padding-top: 17.4px;
}
.hint .field.focus {
    height: 42.6px;
    padding-top: 0;
}
.hint small {
    display: block;
    margin: 6.2px 0 0 -0.8px;
    font-size: 10.2px;
    line-height: 14px;
    color: #93949b;
}
.hint .focus + small {
    margin-top: 5.8px;
}
.fields .with-icons {
    display: flex;
    width: 655.4px;
    height: 237px;
    margin: 18.6px 0 0 -1.7px;
}
.with-icons .dash rect {
    height: calc(100% + 20px);
}
.col-inactive {
    width: 313.4px;
    padding: 20px 0 0 71.2px;
}
.col-inactive .select {
    width: 187.6px;
    height: 41px;
    margin-left: 10.7px;
    padding-top: 15px;
    justify-content: space-between;
}
.chev {
    width: 12px;
    height: 8px;
    stroke-width: 2;
    color: #262f94;
}
.col-inactive .chev {
    margin: 4.7px 10px 0 0;
}
.col-inactive .search {
    width: 213.3px;
    height: 31px;
    margin-top: 130px;
    padding: 5.6px 0 0 7.5px;
}
.search .value {
    margin-left: 3.3px;
    font-size: 11.8px;
}
.glass {
    width: 16px;
    height: 16px;
    stroke-width: 1.8;
    color: #262f94;
}
.col-inactive .glass {
    margin-top: -2px;
}
.col-active {
    padding-top: 19.3px;
}
.col-active .field {
    width: 325.5px;
}
.col-active label {
    font-size: 10.12px;
}
.col-active .select {
    width: 68px;
    height: 44.7px;
}
.col-active .select label {
    margin-left: 0.2px;
}
.col-active .select .chev {
    margin: 10.6px 0 0 52.2px;
}
.col-active .phone {
    width: 325.2px;
    height: 42px;
    margin: 23.6px 0 0 1px;
}
.phone label {
    margin-left: 0;
}
.number {
    display: flex;
    align-items: center;
    height: 16px;
    margin-top: 2.8px;
    font-size: 11.6px;
    line-height: 16px;
}
.flag {
    width: 19.4px;
    height: 13.4px;
    stroke: none;
}
.number span {
    margin: 0 5px 0 6.6px;
    color: #4a51a5;
}
.field.focus.search {
    flex-direction: row;
    height: 32px;
    margin-top: 55.8px;
    padding: 8.2px 0 0 9.5px;
}
.focus.search .glass {
    margin-top: 0;
}
```
